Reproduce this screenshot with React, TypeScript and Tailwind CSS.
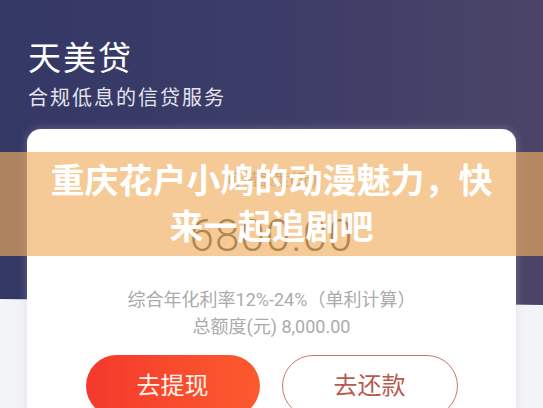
const cjk = { fontFamily: 'Roboto, "Noto Sans CJK SC", "Noto Sans", sans-serif' };

function LoanCard() {
  return (
    <div className="mx-[27px] mt-[21px] h-[320px] rounded-[14px] bg-white pt-[43px] flex flex-col items-center shadow-[0_0_10px_rgba(190,190,215,0.35)]">
      <div className="text-[16px] leading-none text-[#9a9a9a]">可借额度(元)</div>
      <div className="mt-[26px] text-[44px] leading-none font-light text-[#3a3a3a] tracking-[1px]">6800.00</div>
      <div className="mt-[33px] text-[18px] leading-none text-[#ababab]">综合年化利率12%-24%（单利计算）</div>
      <div className="mt-[9px] text-[18px] leading-none text-[#ababab]">总额度(元) 8,000.00</div>
      <div className="mt-[19px] flex gap-[22px]">
        <button className="w-[174px] h-[62px] rounded-full bg-gradient-to-r from-[#f4382b] to-[#fc5a2f] text-[24px] text-[#fff1ea]">
          去提现
        </button>
        <button className="w-[176px] h-[62px] rounded-full border-[1.5px] border-[#c9776d] text-[24px] text-[#b85a50]">
          去还款
        </button>
      </div>
    </div>
  );
}

export default function App() {
  return (
    <div className="relative w-[543px] h-[408px] overflow-hidden bg-[#f3f4f7]" style={cjk}>
      <div className="absolute inset-x-0 top-0 h-[305px] bg-gradient-to-r from-[#343865] via-[#3c3c68] to-[#4b4467] [clip-path:polygon(0_0,100%_0,100%_100%,0_calc(100%-6px))]" />
      <div className="relative">
        <div className="px-[28px] pt-[42px] text-[33px] leading-none text-white tracking-[2px]">天美贷</div>
        <div className="px-[28px] mt-[13px] text-[20px] leading-none text-[#e4e4ee] tracking-[2px]">合规低息的信贷服务</div>
        <LoanCard />
      </div>
      <div className="absolute inset-x-0 top-[152px] h-[104px] bg-[rgba(240,174,94,0.65)] flex items-center justify-center px-[40px]">
        <div className="text-center text-[34px] leading-[46px] font-bold text-white">
          重庆花户小鸠的动漫魅力，快来一起追剧吧
        </div>
      </div>
    </div>
  );
}
